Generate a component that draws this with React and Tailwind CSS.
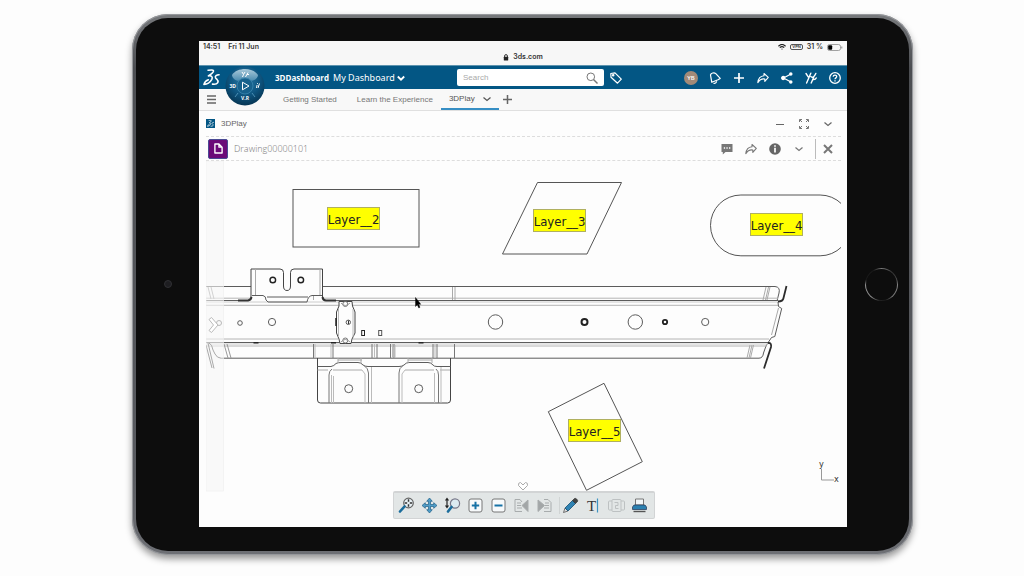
const shapeStroke = '#5c5c5c';

const DsLogo = ({ className }) => (
  <svg viewBox="0 0 54 54" className={className} fill="none" stroke="currentColor" strokeWidth="5" strokeLinecap="round" strokeLinejoin="round">
    <path d="M16 4C23 3 35 1 33 8C31 13 25 17 17 22C27 20 32 25 28 33C23 42 12 49 3 49C5 41 11 36 17 34" />
    <path d="M51 18C43 18 37 22 40 28C43 33 51 36 47 43C44 48 36 49 30 48" />
  </svg>
);

const Chevron = ({ className = 'w-2 h-2' }) => (
  <svg viewBox="0 0 8 8" className={className} fill="none" stroke="currentColor" strokeWidth="1.2">
    <path d="M.5 2.500 4 5.500 7.500 2.500" />
  </svg>
);

const Plus = ({ className }) => (
  <svg viewBox="0 0 10 10" className={className} fill="none" stroke="currentColor" strokeWidth="1.7">
    <path d="M5 0v10M0 5h10" />
  </svg>
);

const Share = ({ className }) => (
  <svg viewBox="0 0 12 12" className={className} fill="none" stroke="currentColor" strokeWidth="1.1" strokeLinejoin="round">
    <path d="M7 1.5 11.3 5.3 7.8 9.3V7C5 6.600 2.700 7.600.8 10.600C1.200 6.800 3.400 4 7 3.700Z" />
  </svg>
);

const Compass = () => (
  <svg viewBox="0 0 40 40" className="w-10 h-10">
    <defs>
      <radialGradient id="ball" cx="50%" cy="35%" r="65%">
        <stop offset="0" stopColor="#2a7ba8" />
        <stop offset="0.6" stopColor="#0e5580" />
        <stop offset="1" stopColor="#063553" />
      </radialGradient>
      <linearGradient id="shine" x1="0" y1="0" x2="0" y2="1">
        <stop offset="0" stopColor="#a9c9da" />
        <stop offset="1" stopColor="#4a8bb0" />
      </linearGradient>
    </defs>
    <circle cx="20" cy="20" r="19.500" fill="url(#ball)" />
    <path d="M7 9C12 1 28 1 33 9C33 12 29 15 26 15C23 12 17 12 14 15C11 15 7 12 7 9Z" fill="url(#shine)" />
    <circle cx="20" cy="20" r="8" fill="#17618c" stroke="#3b86ae" strokeWidth="0.8" />
    <path d="M17.500 16.200 24 20l-6.500 3.800Z" fill="none" stroke="#fff" strokeWidth="1" />
    <path d="M13 27l-3 4M27 27l3 4" stroke="#5b9dc0" strokeWidth="0.8" />
    <path d="M17 6l1.500 2.500L20 6M18.500 8.500l-1 2.500M20.500 11 23 6.500M22 8.500h2" fill="none" stroke="#fff" strokeWidth="1" />
    <path d="M31.500 22l.6-3M32.500 17v.8M33 22l1.500-4.500" stroke="#fff" strokeWidth="1" />
    <text x="4.500" y="22" fill="#fff" fontSize="5" fontWeight="700" fontFamily="Open Sans, sans-serif">3D</text>
    <text x="16" y="34" fill="#fff" fontSize="5" fontWeight="700" fontFamily="Open Sans, sans-serif">V.R</text>
  </svg>
);

const StatusBar = () => (
  <div className="bg-[#f7f7f7] h-6 px-1 font-[Inter,sans-serif] text-[7px] leading-3 font-semibold text-[#333]">
    <div className="flex justify-between items-center">
      <div className="flex gap-2">
        <span>14:51</span>
        <span>Fri 11 Jun</span>
      </div>
      <div className="flex items-center gap-1">
        <svg viewBox="0 0 8 6" className="w-2 h-1.5" fill="none" stroke="#222" strokeWidth="1.2">
          <path d="M.4 2.200C2.500.2 5.500.2 7.600 2.200M1.800 3.600C3 2.500 5 2.500 6.200 3.600" />
          <circle cx="4" cy="5" r=".6" fill="#222" stroke="none" />
        </svg>
        <span className="border border-[#555] rounded-xs px-px text-[4px] leading-1">VPN</span>
        <span>31 %</span>
        <svg viewBox="0 0 16 7" className="w-4 h-[7px]">
          <rect x=".5" y=".5" width="13" height="6" rx="2" fill="none" stroke="#8a8a8a" strokeWidth=".8" />
          <rect x="1.200" y="1.200" width="4" height="4.600" rx="1" fill="#000" />
          <path d="M14.800 2.500v2" stroke="#8a8a8a" />
        </svg>
      </div>
    </div>
    <div className="flex justify-center items-center gap-1 leading-2">
      <svg viewBox="0 0 6 7" className="w-1.5 h-[7px]">
        <path d="M1.600 3V2a1.400 1.400 0 0 1 2.800 0v1" fill="none" stroke="#222" strokeWidth=".9" />
        <rect x=".8" y="2.800" width="4.400" height="3.600" rx=".5" fill="#222" />
      </svg>
      <span>3ds.com</span>
    </div>
  </div>
);

const topIcons = [
  {
    label: 'Notifications',
    icon: (
      <svg viewBox="0 0 12 12" className="w-3 h-3" fill="none" stroke="currentColor" strokeWidth="1.200" strokeLinejoin="round">
        <path d="M2.800 10.300 1.500 3C2 .8 5.200.3 6.800 1.600L11.200 6.400 9 7.800Z" />
        <path d="M4.500 11.200C6 11.700 7.500 10.800 7.600 9.200" />
      </svg>
    ),
  },
  { label: 'Add', icon: <Plus className="w-2.5 h-2.5" /> },
  { label: 'Share', icon: <Share className="w-3 h-3" /> },
  {
    label: 'Connections',
    icon: (
      <svg viewBox="0 0 12 12" className="w-3 h-3" fill="currentColor" stroke="currentColor" strokeWidth="1.300">
        <path d="M2.500 6 10 2M2.500 6 10 10" />
        <circle cx="2.200" cy="6" r="1.500" />
        <circle cx="9.800" cy="2" r="1.100" />
        <circle cx="9.800" cy="10" r="1.100" />
      </svg>
    ),
  },
  {
    label: 'Community',
    icon: (
      <svg viewBox="0 0 12 12" className="w-3 h-3" fill="none" stroke="currentColor" strokeWidth="1.400" strokeLinecap="round">
        <path d="M1 1.500 3.400 5.200M5.800 1.200 1.600 11" />
        <path d="M5.800 4.500C7.600 6 9 5.500 10.800 1.500M8.600 5.600 6.200 11M8.800 7.600C10 7.600 10.800 7 11.200 6" />
      </svg>
    ),
  },
  {
    label: 'Help',
    icon: (
      <svg viewBox="0 0 12 12" className="w-3 h-3" fill="none" stroke="currentColor" strokeWidth="1.300">
        <circle cx="6" cy="6" r="5.300" />
        <path d="M4.200 4.700C4.300 2.500 7.800 2.600 7.700 4.700C7.600 5.900 6 5.900 6 7.300M6 8.300v1.200" />
      </svg>
    ),
  },
];

const TopBar = () => (
  <header className="relative flex items-center h-6 bg-[#035684] border-t border-[#5d93ae] text-white font-[Open_Sans,sans-serif]">
    <div className="w-[258px] shrink-0 flex items-center pl-1">
      <DsLogo className="w-[17px] h-[17px]" />
      <div className="ml-[55px] flex items-center gap-1 text-[8px] whitespace-nowrap">
        <span className="font-bold">3DDashboard</span>
        <button className="flex items-center gap-0.5 text-[9px] font-[Noto_Sans,sans-serif]">
          My Dashboard
          <svg viewBox="0 0 8 8" className="w-2 h-2" fill="none" stroke="currentColor" strokeWidth="1.800">
            <path d="M.8 2.500 4 5.700 7.200 2.500" />
          </svg>
        </button>
      </div>
    </div>
    <button aria-label="Compass" className="absolute left-[26px] top-0 z-10">
      <Compass />
    </button>
    <label className="flex items-center w-[147px] h-[17px] rounded-xs bg-white px-1.5">
      <input
        type="text"
        aria-label="Search"
        placeholder="Search"
        className="flex-1 min-w-0 bg-transparent text-[8px] font-[Liberation_Sans,sans-serif] text-gray-700 placeholder:text-[#aaa] outline-none"
      />
      <svg viewBox="0 0 12 12" className="w-3 h-3 text-[#777]" fill="none" stroke="currentColor">
        <circle cx="4.800" cy="4.800" r="3.800" />
        <path d="m7.500 7.500 4 4" strokeWidth="1.400" />
      </svg>
    </label>
    <button aria-label="Tags" className="ml-1.5">
      <svg viewBox="0 0 12 12" className="w-3 h-3" fill="none" stroke="currentColor" strokeWidth="1.200" strokeLinejoin="round">
        <path d="M.8 1.500 5 .8 11.300 7.200 7.500 11.200 1 5.200Z" />
        <circle cx="3.200" cy="3.200" r=".7" />
      </svg>
    </button>
    <div className="ml-auto flex items-center gap-2 pr-1">
      <button className="w-4 flex justify-center">
        <span className="w-[14px] h-[14px] shrink-0 rounded-full bg-[#a18a78] text-[6px] leading-[14px] font-semibold">YB</span>
      </button>
      {topIcons.map((item) => (
        <button key={item.label} aria-label={item.label} className="w-4 flex justify-center">
          {item.icon}
        </button>
      ))}
    </div>
  </header>
);

const Tabs = () => (
  <nav className="flex items-stretch h-[22px] bg-[#f8f8f8] border-b border-[#e0e0e0] text-[8px] text-[#777] font-[Liberation_Sans,sans-serif] whitespace-nowrap">
    <button aria-label="Menu" className="pl-2">
      <svg viewBox="0 0 9 9" className="w-[9px] h-[9px]" stroke="#666" strokeWidth="1.300">
        <path d="M0 1h9M0 4.500h9M0 8h9" />
      </svg>
    </button>
    <a href="#start" className="ml-[67px] flex items-center">Getting Started</a>
    <a href="#learn" className="ml-5 flex items-center">Learn the Experience</a>
    <a href="#play" className="ml-2 px-2 flex items-center gap-2 border-b-2 border-[#368ec4] text-[#555]">
      3DPlay
      <Chevron />
    </a>
    <button aria-label="Add tab" className="ml-1">
      <Plus className="w-[9px] h-[9px] text-[#666]" />
    </button>
  </nav>
);

const iconCell = 'w-4 flex justify-center';

const WidgetHeader = () => (
  <div className="flex items-center h-[26px] border-b border-dashed border-[#ddd] text-[#666]">
    <span className="flex w-[9px] h-[9px] bg-[#035684] text-white p-px">
      <DsLogo className="w-full h-full" />
    </span>
    <h1 className="ml-1.5 text-[8px] font-[Liberation_Sans,sans-serif]">3DPlay</h1>
    <div className="ml-auto flex items-center gap-2 pr-[5px]">
      <button aria-label="Minimize" className={iconCell}>
        <svg viewBox="0 0 8 8" className="w-2 h-2" stroke="currentColor"><path d="M0 4.500h8" /></svg>
      </button>
      <button aria-label="Full screen" className={iconCell}>
        <svg viewBox="0 0 10 10" className="w-2.5 h-2.5" fill="none" stroke="currentColor" strokeWidth=".9">
          <path d="M.5 3V.5H3M1 1l2 2M7 .5h2.500V3M9 1 7 3M.5 7v2.500H3M1 9l2-2M7 9.500h2.500V7M9 9 7 7" />
        </svg>
      </button>
      <button aria-label="Widget menu" className={iconCell}><Chevron /></button>
    </div>
  </div>
);

const DocumentHeader = () => (
  <div className="flex items-center h-6 border-b border-dashed border-[#ddd] text-[#777]">
    <span className="ml-0.5 w-5 h-5 flex items-center justify-center rounded-xs bg-[#6b0a78] border border-[#4a4a94] text-white">
      <svg viewBox="0 0 10 12" className="w-[9px] h-[11px]" fill="none" stroke="currentColor" strokeWidth="1.500" strokeLinejoin="round">
        <path d="M1 1h4.500L9 4.500V11H1ZM5.500 1v3.500H9" />
      </svg>
    </span>
    <h2 className="ml-1.5 text-[9px] font-light text-[#777] font-[Open_Sans,sans-serif]">Drawing00000101</h2>
    <div className="ml-auto flex items-center gap-2 pr-[5px]">
      <button aria-label="Comments" className={iconCell}>
        <svg viewBox="0 0 12 12" className="w-3 h-3" fill="currentColor">
          <path d="M.5 1h11v8H4.500L1.800 11.500V9H.5Z" />
          <path d="M2.800 5h1.300M5.400 5h1.300M8 5h1.300" stroke="#fff" strokeWidth="1.300" />
        </svg>
      </button>
      <button aria-label="Share document" className={iconCell}><Share className="w-3 h-3" /></button>
      <button aria-label="Information" className={iconCell}>
        <svg viewBox="0 0 12 12" className="w-3 h-3">
          <circle cx="6" cy="6" r="5.800" fill="#666" />
          <path d="M6 2.200v1.600M6 4.800v4.800" stroke="#fff" strokeWidth="1.700" />
        </svg>
      </button>
      <button aria-label="More" className={iconCell}><Chevron /></button>
      <button aria-label="Close" className="w-[21px] h-5 pl-1 flex items-center justify-center border-l border-[#bbb]">
        <svg viewBox="0 0 10 10" className="w-2.5 h-2.5" stroke="currentColor" strokeWidth="2"><path d="m1 1 8 8M9 1 1 9" /></svg>
      </button>
    </div>
  </div>
);

const labels = [
  { text: 'Layer__2', x: 327, y: 207 },
  { text: 'Layer__3', x: 533, y: 209 },
  { text: 'Layer__4', x: 750, y: 213 },
  { text: 'Layer__5', x: 568, y: 419 },
];

const holes = [
  [219, 323, 2.5], [240, 323, 2.3], [272, 322, 3.6], [495.5, 322, 7.2],
  [635.3, 322, 7.2], [705.2, 322, 3.6], [348.7, 388.7, 4], [418.7, 388.7, 4],
];

const Drawing = () => (
  <svg viewBox="206 161 635 366" className="block w-full h-auto" fill="none" stroke={shapeStroke} strokeWidth="1">
    <g stroke="#555">
      <rect x="293" y="189.500" width="126" height="57.500" />
      <path d="M537.500 182.500H621.500L587 254H502.500Z" />
      <rect x="710.500" y="195" width="140" height="60.800" rx="30.400" />
      <path d="M548.300 411.700 604 383.300 642.300 461.700 586.500 490.300Z" />
    </g>

    {/* rail */}
    <path d="M206 286.500H251M323 286.500H775Q780.500 287 779 293L777 301M206 300.500H238M336 300.500H778M206 342.500H768M221 358.200H759Q763 358 763.500 353L766 346Q767 343 769 343" />
    <path d="M206 298.200H250M323 298.200H778M206 305.300H339M353 305.300H779M206 339H338M353 339H769M206 346H767" stroke="#b4b4b4" />
    <path d="M206 302H778M206 344H768" stroke="#ccc" />
    <path d="M778 302 778.500 306.500 781.700 308.500 774.800 336.500 771.500 337.500 768.500 342" />
    <path d="M778.500 308 771.500 335" stroke="#aaa" />
    <path d="M786.500 286 783.500 298Q783 301.500 778 301.500" stroke="#2c2c2c" strokeWidth="1.800" />
    <path d="M768 343Q771.800 342.500 771 347L764 368.500" stroke="#2c2c2c" strokeWidth="1.800" />
    <path d="M766 287 763 300M768.500 287 765.500 300M770 287 767 300M750 345 747 358M752 345 749 358M753.500 345 750.500 358M452.500 287V300M455 287V300" stroke="#aaa" />
    <path d="M208 343 214 368.500M206 345 212 368M209 343Q212 344 213 350L215 354Q217 358 221 358.200" stroke="#333" />
    <path d="M224 344 228 358M227 344 231 358M208 287 211 299M211 287 214 299" stroke="#999" />
    <path d="M313.500 344V358M333 344V358M372 344V358M377 344V358M390.500 344V358M394 344V358M433 344V358M437 344V358M454.500 344V358" stroke="#777" />
    <path d="M331 344V358M315 344V358M374.500 344V358M392.500 344V358M435 344V358" stroke="#bbb" />
    <path d="M253.500 342.700h5M331 342.700h5M418.500 342.700h5" stroke="#222" strokeWidth="1.500" />

    {/* upper bracket */}
    <path d="M251 297V269H280Q283.500 269 283.500 272.500V286Q283.500 290.500 287 290.500T290.500 286V272.500Q290.500 269 294 269H322.500V297" stroke="#444" />
    <path d="M255.500 269V295M320 269V295M313.500 296V300" stroke="#aaa" />
    <path d="M267 297H308M252 295.500H263Q266 296 266 300L268 302H307Q308 296 312 295.500H322" />
    <path d="M238 300.500H248Q251 300 251.500 297M322.500 297Q323 300.500 326 300.500H336" stroke="#333" strokeWidth="2" />
    <circle cx="272.800" cy="280" r="2.800" stroke="#222" strokeWidth="1.400" />
    <circle cx="300.800" cy="280" r="2.800" stroke="#222" strokeWidth="1.400" />

    {/* clip */}
    <path d="M339 301.500H352L352.500 306 355 312V333L352 339 351 343.500H340L339 339 336.500 333V312L339 306Z" fill="#fdfdfd" stroke="#444" />
    <path d="M338.500 309V337M353 309V337" stroke="#bbb" />
    <path d="M336 318V326" stroke="#222" strokeWidth="1.500" />
    <circle cx="345.300" cy="304" r="2.500" stroke="#777" />
    <circle cx="345.300" cy="340.500" r="2.500" stroke="#777" />
    <path d="M341 303Q345 308 350 303M341 342Q345 337 350 342" stroke="#999" />
    <circle cx="348.300" cy="322.300" r="2.200" />
    <path d="M348.500 320.500V324" stroke="#333" />
    <rect x="361.700" y="330.500" width="2.800" height="5" stroke="#222" />
    <rect x="378.700" y="330.500" width="3" height="5" stroke="#555" />

    {/* lower bracket */}
    <path d="M317.500 358V400Q317.500 403 320.500 403H447.500Q450.500 403 450.500 400V358" stroke="#444" />
    <path d="M317.500 366.500H331Q334 366 336 363.500Q338 362.500 341 362.500H358Q361 362.500 363 365Q365 366.500 368 366.500H399Q402 366.500 404 365Q406 362.500 409 362.500H428Q431 362.500 433 365Q434 366.500 437 366.500H450.500" />
    <path d="M329 403V375Q329 371 332 369M364.500 366Q368 368 368.500 373V403M438.500 403V375Q438.500 371 436 369M402.500 366Q399 368 399 373V403" stroke="#777" />
    <path d="M317.500 370H328M440 370H450M338 358V363M361 358V363M408 358V363M432 358V363M338 360H362M408 360H432M333 370H362M405 370H434" stroke="#aaa" />
    <path d="M331.500 403V375M333.500 403V376M365 403V374L362 370M371.500 367V403M395 345V358M402 403V374L405 370M434.500 403V373M441 367V403" stroke="#bbb" />

    {holes.map(([cx, cy, r]) => (
      <circle key={cx} cx={cx} cy={cy} r={r} />
    ))}
    <circle cx="584.500" cy="322" r="3" stroke="#222" strokeWidth="2" />
    <circle cx="665" cy="322" r="2.200" stroke="#222" strokeWidth="1.800" />

    {/* collapsed side panel */}
    <rect x="206" y="161" width="17.500" height="330" fill="#f7f7f7" fillOpacity=".6" stroke="#eee" strokeWidth=".6" />
    <path d="M209 319.500 211.500 317.500 218 325 211.500 332.500 209 330.500 213.500 325Z" fill="#fff" stroke="#bbb" />

    {labels.map((label) => (
      <g key={label.text}>
        <rect x={label.x + 0.5} y={label.y + 0.5} width="52" height="22" fill="#ffff00" stroke="#b0b060" />
        <text
          x={label.x + 26.5}
          y={label.y + 17}
          textAnchor="middle"
          fontSize="13"
          fontFamily="DejaVu Sans Condensed, DejaVu Sans, sans-serif"
          fill="#222"
          stroke="none"
        >
          {label.text}
        </text>
      </g>
    ))}

    <path d="M821.500 469V480H834" stroke="#999" />
    <g fill="#333" stroke="none" fontSize="9" fontFamily="DejaVu Sans Condensed, DejaVu Sans, sans-serif">
      <text x="819" y="467">y</text>
      <text x="834" y="482">x</text>
    </g>

    <path d="M523 490 518.500 485.500Q518 482.500 520.500 482.500L523 485 525.500 482.500Q528 482.500 527.500 485.500Z" fill="#fff" stroke="#aaa" />
    <path d="M415.500 297.500V306.500L417.300 304.800 418.800 308 420 307.300 418.600 304.300H420.800Z" fill="#000" stroke="#000" strokeWidth=".4" />
  </svg>
);

const tool = 'w-[17px] h-[17px]';

const tools = [
  {
    label: 'Fit all',
    icon: (
      <svg viewBox="0 0 17 17" className={tool} fill="none">
        <circle cx="10.500" cy="6" r="4.800" fill="#e8f1f5" stroke="#666" strokeWidth="1.200" />
        <path d="M10.500 2.300v2.400M10.500 7.300v2.400M6.800 6h2.400M11.800 6h2.400" stroke="#333" strokeWidth="1.500" />
        <path d="M6.500 9.500 2 14.500" stroke="#1b6d9c" strokeWidth="2.600" strokeLinecap="round" />
      </svg>
    ),
  },
  {
    label: 'Pan',
    icon: (
      <svg viewBox="0 0 17 17" className={tool} fill="#4f9dc8" stroke="#1f5f87" strokeWidth=".7" strokeLinejoin="round">
        <path d="M8.500 1 11.300 4.300H9.500V7.500H12.700V5.700L16 8.500 12.700 11.300V9.500H9.500V12.700H11.300L8.500 16 5.700 12.700H7.500V9.500H4.300V11.300L1 8.500 4.300 5.700V7.500H7.500V4.300H5.700Z" />
      </svg>
    ),
  },
  {
    label: 'Zoom',
    icon: (
      <svg viewBox="0 0 17 17" className={tool} fill="none">
        <circle cx="11" cy="6.500" r="4.600" fill="#dceaf1" stroke="#778" strokeWidth="1.200" />
        <path d="M3 2v8M1.500 3.500 3 1.500l1.500 2M1.500 8.500 3 10.500l1.500-2" stroke="#222" strokeWidth="1.200" />
        <path d="M7.500 10 4 14.500" stroke="#1b6d9c" strokeWidth="2.600" strokeLinecap="round" />
      </svg>
    ),
  },
  {
    label: 'Zoom in',
    icon: (
      <svg viewBox="0 0 17 17" className={tool}>
        <rect x="2" y="2" width="13" height="13" rx="2" fill="#f7fafb" stroke="#777" />
        <path d="M8.500 4.800v7.400M4.800 8.500h7.400" stroke="#1672a6" strokeWidth="2" />
      </svg>
    ),
  },
  {
    label: 'Zoom out',
    icon: (
      <svg viewBox="0 0 17 17" className={tool}>
        <rect x="2" y="2" width="13" height="13" rx="2" fill="#f7fafb" stroke="#777" />
        <path d="M4.500 8.500h8" stroke="#1672a6" strokeWidth="2" />
      </svg>
    ),
  },
  {
    label: 'Previous sheet',
    icon: (
      <svg viewBox="0 0 17 17" className={tool} fill="none" stroke="#a8acad">
        <path d="M9 14.500H2v-12h5L9 5M4 6h4M4 8.500h4M4 11h5" />
        <path d="M15 3v11.500L9 8.500Z" fill="#a2a6a7" />
      </svg>
    ),
  },
  {
    label: 'Next sheet',
    icon: (
      <svg viewBox="0 0 17 17" className={tool} fill="none" stroke="#a8acad">
        <path d="M8 2.500h4L15 5.500v9H8M9 6h4M9 8.500h4M8 11h5" />
        <path d="M2 3v11.500L8.500 8.500Z" fill="#a2a6a7" />
      </svg>
    ),
  },
  {
    label: 'Markup',
    separated: true,
    icon: (
      <svg viewBox="0 0 17 17" className={tool} strokeLinejoin="round">
        <path d="M1.500 15.500 3 11 6 14Z" fill="#ddd" stroke="#444" strokeWidth=".7" />
        <path d="M3 11 10.500 3.500 13.500 6.500 6 14Z" fill="#2f83b3" stroke="#174e70" strokeWidth=".8" />
        <path d="M10.500 3.500 12.500 1.500Q13.500 1 14.800 2.300T15.500 4.500L13.500 6.500Z" fill="#444" stroke="#333" strokeWidth=".7" />
      </svg>
    ),
  },
  {
    label: 'Text',
    icon: (
      <svg viewBox="0 0 17 17" className={tool}>
        <text x="2" y="13.500" fontSize="15" fontFamily="Liberation Serif, serif" fill="#333">T</text>
        <path d="M12.500 1.500v14" stroke="#3f94c2" strokeWidth="1.200" />
      </svg>
    ),
  },
  {
    label: 'Views',
    icon: (
      <svg viewBox="0 0 17 17" className={tool} fill="none" stroke="#bdc1c2">
        <rect x="4" y="2.500" width="9" height="12" rx="1" />
        <path d="M4 4H1.500Q.5 4 .5 5v7q0 1 1 1H4M13 4h2.500q1 0 1 1v7q0 1-1 1H13" />
        <path d="M6.500 5.500h3.500v3H7.500v3H10.500" />
      </svg>
    ),
  },
  {
    label: 'Print',
    icon: (
      <svg viewBox="0 0 17 17" className={tool}>
        <path d="M4.500 2h8v6h-8Z" fill="#f2f6f8" stroke="#777" />
        <path d="M3 8h11l1.500 2v2.500h-14v-2.500Z" fill="#2b80b0" stroke="#235" strokeWidth=".7" />
        <path d="M2.500 14.500h12" stroke="#555" strokeWidth="1.400" />
      </svg>
    ),
  },
];

const Toolbar = () => (
  <div className="absolute inset-x-0 bottom-2 flex justify-center">
    <div className="flex items-center gap-1.5 h-7 pl-1 pr-1.5 bg-[#e2e6e6] border border-t-2 border-[#d2d4d5] rounded-xs">
      {tools.map((item) => (
        <button key={item.label} aria-label={item.label} className={item.separated ? 'border-l border-[#d0d4d4] pl-0.5' : ''}>
          {item.icon}
        </button>
      ))}
    </div>
  </div>
);

const App = () => {
  return (
    <div className="min-h-screen bg-[#fdfdfd] pt-3.5 pb-5 pl-33 pr-[111px]">
      <div className="rounded-[36px] bg-[linear-gradient(to_bottom,#77797c,#4c4e52_10%,#595b60_85%,#6e7075)] p-1 shadow-[0_4px_7px_rgba(0,0,0,0.4)] ring-1 ring-inset ring-[#96989c]">
        <div className="flex rounded-[32px] bg-[#0d0d0d] pt-[23px] pb-6">
          <div className="w-[63px] shrink-0 flex items-center justify-center">
            <span className="w-2 h-2 rounded-full bg-[#1e1e21] border border-[#303034]" />
          </div>
          <main className="flex-1 min-w-0 bg-[#fdfdfd] overflow-hidden">
            <StatusBar />
            <TopBar />
            <Tabs />
            <div className="pl-[7px] pr-1.5">
              <WidgetHeader />
              <DocumentHeader />
              <div className="relative">
                <Drawing />
                <Toolbar />
              </div>
            </div>
          </main>
          <div className="w-[62px] shrink-0 flex items-center justify-center pl-1.5">
            <button
              aria-label="Home"
              className="w-[33px] h-[33px] rounded-full p-px bg-[conic-gradient(#777,#333_12%,#444_18%,#888_26%,#777_38%,#1a1a1a_46%,#222_52%,#888_60%,#999_74%,#1a1a1a_80%,#1a1a1a_92%,#777)]"
            >
              <span className="block w-full h-full rounded-full bg-[#0d0d0d]" />
            </button>
          </div>
        </div>
      </div>
    </div>
  );
};

export default App;
